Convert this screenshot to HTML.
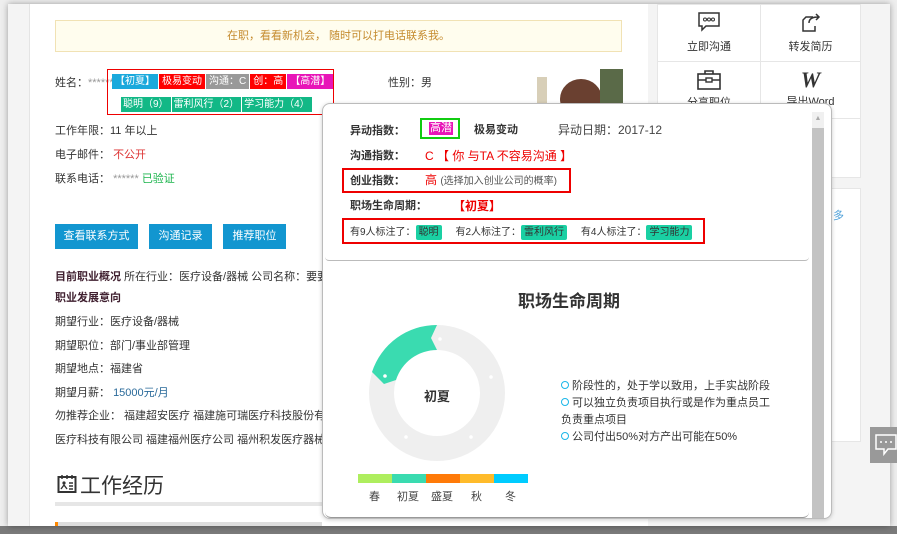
<!DOCTYPE html>
<html><head><meta charset="utf-8">
<style>
*{margin:0;padding:0;box-sizing:border-box}
body{width:897px;height:534px;overflow:hidden;background:#eee;font-family:"Liberation Sans","Noto Sans CJK SC",sans-serif;font-size:12px;color:#333;position:relative}
.abs{position:absolute}
.win{left:8px;top:4px;width:882px;height:522px;background:#f4f4f4;box-shadow:0 0 6px rgba(0,0,0,.35)}
.main{left:29px;top:4px;width:619px;height:522px;background:#fff;border-left:1px solid #e4e4e4}
.alert{left:55px;top:20px;width:567px;height:32px;background:#fffdee;border:1px solid #f1e2b4;color:#c58b2e;text-align:center;line-height:30px;font-size:11px}
.tag{display:inline-block;color:#fff;padding:0 3px;height:15px;line-height:15px;font-size:10px;margin-right:1px}
.r2 .tag{padding:0 2px}
.btn{position:absolute;top:224px;height:25px;background:#1296d0;color:#fff;line-height:25px;text-align:center;font-size:11px}
.ln{position:absolute;left:55px;font-size:11px;color:#333}
.rc{background:#fff;border:1px solid #e6e6e6;position:absolute;text-align:center;font-size:11px;color:#333}
.pop{left:322px;top:103px;width:510px;height:416px;background:#fff;border:1px solid #bbb;border-radius:8px;box-shadow:0 1px 4px rgba(0,0,0,.2)}
.lb{position:absolute;font-weight:bold;font-size:11px;color:#333}
.rb{position:absolute;border:2px solid #e00}
.gt{display:inline-block;background:#1ad0a3;color:#333;padding:0 3px;border-radius:2px;height:15px;line-height:15px}
</style></head><body>
<div class="abs" style="left:0;top:526px;width:897px;height:8px;background:#7a7a7a"></div>
<div class="abs win"></div>
<div class="abs main"></div>
<div class="abs alert">在职，看看新机会， 随时可以打电话联系我。</div>

<div class="ln" style="top:74px">姓名：<span style="color:#999">******</span></div>
<div class="abs" style="left:107px;top:69px;width:227px;height:46px;border:1px solid #e00"></div>
<div class="abs" style="left:112px;top:73px;white-space:nowrap"><span class="tag" style="background:#1aa9dc">【初夏】</span><span class="tag" style="background:#f00">极易变动</span><span class="tag" style="background:#999">沟通：C</span><span class="tag" style="background:#f00">创：高</span><span class="tag" style="background:#e815b8">【高潜】</span></div>
<div class="abs r2" style="left:121px;top:96px;white-space:nowrap"><span class="tag" style="background:#12b886">聪明（9）</span><span class="tag" style="background:#12b886">雷利风行（2）</span><span class="tag" style="background:#12b886">学习能力（4）</span></div>
<div class="ln" style="left:388px;top:74px">性别：男</div>
<div class="abs" style="left:537px;top:69px;width:86px;height:34px;background:#fff;overflow:hidden">
<div class="abs" style="left:0;top:8px;width:10px;height:26px;background:#d8cfb8"></div>
<div class="abs" style="left:23px;top:10px;width:42px;height:40px;border-radius:50%;background:#6a4030"></div>
<div class="abs" style="left:63px;top:0;width:23px;height:34px;background:#5a6a48"></div>
</div>

<div class="ln" style="top:122px">工作年限：11 年以上</div>
<div class="ln" style="top:146px">电子邮件： <span style="color:#d33">不公开</span></div>
<div class="ln" style="top:170px">联系电话： <span style="color:#999">******</span> <span style="color:#1bb44c">已验证</span></div>

<div class="btn" style="left:55px;width:83px">查看联系方式</div>
<div class="btn" style="left:149px;width:63px">沟通记录</div>
<div class="btn" style="left:223px;width:63px">推荐职位</div>

<div class="ln" style="top:268px;white-space:nowrap"><b style="color:#402030">目前职业概况</b> 所在行业：医疗设备/器械 公司名称：要要股份</div>
<div class="ln" style="top:289px"><b style="color:#402030">职业发展意向</b></div>
<div class="ln" style="top:313px">期望行业：医疗设备/器械</div>
<div class="ln" style="top:337px">期望职位：部门/事业部管理</div>
<div class="ln" style="top:360px">期望地点：福建省</div>
<div class="ln" style="top:384px">期望月薪： <span style="color:#2a6a9a">15000元/月</span></div>
<div class="ln" style="top:407px;white-space:nowrap">勿推荐企业： 福建超安医疗 福建施可瑞医疗科技股份有限公司</div>
<div class="ln" style="top:431px;white-space:nowrap">医疗科技有限公司 福建福州医疗公司 福州积发医疗器械有限公司</div>
<svg class="abs" style="left:57px;top:474px" width="20" height="20" viewBox="0 0 20 20"><rect x="1.5" y="3" width="17" height="15" fill="none" stroke="#333" stroke-width="2"/><path d="M5 1v4M10 1v4M15 1v4" stroke="#333" stroke-width="1.5"/><circle cx="7" cy="9" r="1.6" fill="#333"/><path d="M4 15l3-4 3 4M12 9h4M12 12h4M12 15h4" stroke="#333" stroke-width="1.4" fill="none"/></svg>
<div class="abs" style="left:80px;top:470px;font-size:21px;color:#333">工作经历</div>
<div class="abs" style="left:55px;top:502px;width:267px;height:4px;background:#e6e6e6"></div>
<div class="abs" style="left:55px;top:522px;width:267px;height:4px;background:#ddd"></div>
<div class="abs" style="left:55px;top:522px;width:3px;height:4px;background:#f80"></div>

<!-- right panel -->
<div class="rc" style="left:657px;top:4px;width:104px;height:58px"><svg style="margin-top:6px" width="24" height="22" viewBox="0 0 24 22"><path d="M2 2h20v13H9l-4 4v-4H2z" fill="none" stroke="#333" stroke-width="1.5"/><circle cx="8" cy="8.5" r="1.5" fill="none" stroke="#333"/><circle cx="12" cy="8.5" r="1.5" fill="none" stroke="#333"/><circle cx="16" cy="8.5" r="1.5" fill="none" stroke="#333"/></svg><div style="margin-top:2px">立即沟通</div></div>
<div class="rc" style="left:760px;top:4px;width:101px;height:58px"><svg style="margin-top:6px" width="24" height="22" viewBox="0 0 24 22"><path d="M14 6H7L4 9v11h12v-5" fill="none" stroke="#333" stroke-width="1.5"/><path d="M10 12c0-4 3-6 9-6M17 3l3 3-3 3" fill="none" stroke="#333" stroke-width="1.5"/></svg><div style="margin-top:2px">转发简历</div></div>
<div class="rc" style="left:657px;top:61px;width:104px;height:58px"><svg style="margin-top:7px" width="26" height="22" viewBox="0 0 26 22"><rect x="2" y="5" width="22" height="15" fill="none" stroke="#333" stroke-width="1.6"/><path d="M9 5V2h8v3M2 11h22" stroke="#333" stroke-width="1.6" fill="none"/><rect x="10" y="9" width="6" height="4" fill="#fff" stroke="#333" stroke-width="1.4"/></svg><div>分享职位</div></div>
<div class="rc" style="left:760px;top:61px;width:101px;height:58px"><div style="margin-top:5px;font:italic bold 22px 'Liberation Serif',serif;color:#333">W</div><div>导出Word</div></div>
<div class="rc" style="left:760px;top:118px;width:101px;height:60px"></div>
<div class="rc" style="left:667px;top:188px;width:194px;height:254px"></div>
<div class="abs" style="left:833px;top:207px;color:#4a9ed8;font-size:11px">多</div>
<div class="abs" style="left:870px;top:427px;width:27px;height:36px;background:#999"></div>
<svg class="abs" style="left:875px;top:433px" width="22" height="24" viewBox="0 0 22 24"><path d="M1 2h20v14h-8l-4 5v-5H1z" fill="none" stroke="#fff" stroke-width="1.5"/><circle cx="6" cy="9" r="1" fill="#fff"/><circle cx="11" cy="9" r="1" fill="#fff"/><circle cx="16" cy="9" r="1" fill="#fff"/></svg>

<!-- popup -->
<div class="abs pop"></div>
<div class="abs" style="left:812px;top:112px;width:12px;height:16px;background:#f0f0f0;color:#aaa;font-size:7px;text-align:center;line-height:14px">▲</div>
<div class="abs" style="left:812px;top:128px;width:12px;height:390px;background:#c3c3c3"></div>
<div class="abs" style="left:325px;top:257px;width:484px;height:4px;border-bottom:1px solid #bbb;border-radius:0 0 6px 6px"></div>

<div class="lb" style="left:350px;top:122px">异动指数：</div>
<div class="abs" style="left:420px;top:118px;width:40px;height:21px;border:2px solid #1c1"></div>
<div class="abs" style="left:429px;top:122px;background:#e815b8;color:#fff;font-size:11px;line-height:13px;padding:0 1px">高潜</div>
<div class="lb" style="left:474px;top:121px">极易变动</div>
<div class="abs" style="left:558px;top:121px;font-size:12px;color:#444">异动日期：2017-12</div>
<div class="lb" style="left:350px;top:147px">沟通指数：</div>
<div class="abs" style="left:425px;top:147px;color:#e00;font-size:12px">C 【 你 与TA 不容易沟通 】</div>
<div class="rb" style="left:342px;top:168px;width:229px;height:25px"></div>
<div class="lb" style="left:350px;top:172px">创业指数：</div>
<div class="abs" style="left:425px;top:171px;color:#e00;font-size:12px">高 <span style="color:#555;font-size:10px">(选择加入创业公司的概率)</span></div>
<div class="lb" style="left:350px;top:197px">职场生命周期：</div>
<div class="abs" style="left:453px;top:197px;color:#e00;font-weight:bold">【初夏】</div>
<div class="rb" style="left:342px;top:218px;width:363px;height:26px"></div>
<div class="abs" style="left:350px;top:223px;font-size:10px;color:#333;white-space:nowrap">有9人标注了：<span class="gt">聪明</span>&nbsp;&nbsp;&nbsp;&nbsp; 有2人标注了：<span class="gt">雷利风行</span>&nbsp;&nbsp;&nbsp;&nbsp; 有4人标注了：<span class="gt">学习能力</span></div>

<div class="abs" style="left:518px;top:287px;font-size:17px;font-weight:bold;color:#333">职场生命周期</div>
<svg class="abs" style="left:360px;top:320px" width="160" height="150" viewBox="360 320 160 150">
<circle cx="437" cy="393" r="55.5" fill="none" stroke="#efefef" stroke-width="25"/>
<path d="M372,372 A68 68 0 0 1 437,325 L431,338 L437,350 A43 43 0 0 0 396,380 L384,384 Z" fill="#3adbb0"/>
<circle cx="385" cy="376" r="1.8" fill="#fff"/><circle cx="440" cy="339" r="1.8" fill="#fff"/><circle cx="491" cy="377" r="1.8" fill="#fff"/><circle cx="471" cy="437" r="1.8" fill="#fff"/><circle cx="406" cy="437" r="1.8" fill="#fff"/>
</svg>
<div class="abs" style="left:424px;top:386px;font-size:13px;font-weight:bold;color:#333">初夏</div>
<div class="abs" style="left:358px;top:474px;width:34px;height:9px;background:#aeee5e"></div>
<div class="abs" style="left:392px;top:474px;width:34px;height:9px;background:#3adbb0"></div>
<div class="abs" style="left:426px;top:474px;width:34px;height:9px;background:#ff7a08"></div>
<div class="abs" style="left:460px;top:474px;width:34px;height:9px;background:#ffbb2a"></div>
<div class="abs" style="left:494px;top:474px;width:34px;height:9px;background:#00ccff"></div>
<div class="abs" style="left:369px;top:488px;font-size:11px;color:#444">春</div>
<div class="abs" style="left:397px;top:488px;font-size:11px;color:#444">初夏</div>
<div class="abs" style="left:431px;top:488px;font-size:11px;color:#444">盛夏</div>
<div class="abs" style="left:471px;top:488px;font-size:11px;color:#444">秋</div>
<div class="abs" style="left:505px;top:488px;font-size:11px;color:#444">冬</div>
<div class="abs" style="left:561px;top:378px;width:230px;font-size:11px;line-height:17px;color:#333">
<span style="display:inline-block;width:8px;height:8px;border:1.5px solid #1ab6e8;border-radius:50%"></span> 阶段性的，处于学以致用，上手实战阶段<br>
<span style="display:inline-block;width:8px;height:8px;border:1.5px solid #1ab6e8;border-radius:50%"></span> 可以独立负责项目执行或是作为重点员工<br>负责重点项目<br>
<span style="display:inline-block;width:8px;height:8px;border:1.5px solid #1ab6e8;border-radius:50%"></span> 公司付出50%对方产出可能在50%</div>
<div class="abs" style="left:325px;top:512px;width:484px;height:6px;border-bottom:1px solid #999;border-radius:0 0 6px 6px"></div>
</body></html>
